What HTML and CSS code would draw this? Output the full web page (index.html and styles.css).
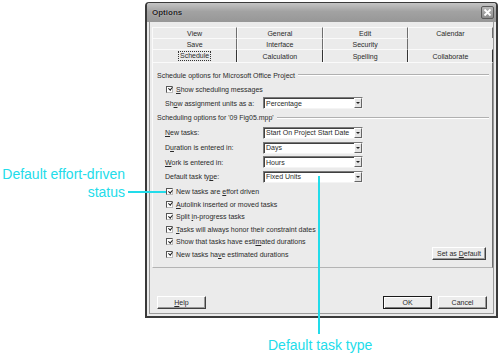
FILE: index.html
```html
<!DOCTYPE html>
<html lang="en">

<head>
    <meta charset="UTF-8">
    <title>Options</title>
    <link rel="stylesheet" href="styles.css">
</head>

<body>
    <div class="page">

        <div class="dialog">
            <div class="titlebar">
                <span class="title">Options</span>
                <span class="close">
                    <svg viewBox="0 0 13 13" width="13" height="13">
                        <path d="M3.5 3.5 L9.5 9.5 M9.5 3.5 L3.5 9.5" stroke="#fff" stroke-width="1.8" />
                    </svg>
                </span>
            </div>

            <div class="content">
                <div class="tabs">
                    <div class="tab-row">
                        <div class="tab">View</div>
                        <div class="tab">General</div>
                        <div class="tab">Edit</div>
                        <div class="tab">Calendar</div>
                    </div>
                    <div class="tab-row">
                        <div class="tab">Save</div>
                        <div class="tab">Interface</div>
                        <div class="tab">Security</div>
                        <div class="tab empty"></div>
                    </div>
                    <div class="tab-row front">
                        <div class="tab selected"><span class="focus">Schedule</span></div>
                        <div class="tab">Calculation</div>
                        <div class="tab">Spelling</div>
                        <div class="tab">Collaborate</div>
                    </div>
                </div>

                <div class="panel">
                    <div class="group-head"><span>Schedule options for Microsoft Office Project</span></div>
                    <div class="check-row"><span class="cb"></span><span><u>S</u>how scheduling messages</span></div>
                    <div class="field-row">
                        <label>Sh<u>o</u>w assignment units as a:</label>
                        <div class="select">Percentage<span class="arrow"></span></div>
                    </div>

                    <div class="group-head second"><span>Scheduling options for '09 Fig05.mpp'</span></div>
                    <div class="field-row tall">
                        <label><u>N</u>ew tasks:</label>
                        <div class="select">Start On Project Start Date<span class="arrow"></span></div>
                    </div>
                    <div class="field-row tall">
                        <label>D<u>u</u>ration is entered in:</label>
                        <div class="select">Days<span class="arrow"></span></div>
                    </div>
                    <div class="field-row">
                        <label><u>W</u>ork is entered in:</label>
                        <div class="select">Hours<span class="arrow"></span></div>
                    </div>
                    <div class="field-row tall">
                        <label>Default task ty<u>p</u>e:</label>
                        <div class="select">Fixed Units<span class="arrow"></span></div>
                    </div>

                    <div class="checks">
                        <div class="check-list">
                            <div class="check-item"><span class="cb"></span><span>New tasks are <u>e</u>ffort driven</span></div>
                            <div class="check-item"><span class="cb"></span><span><u>A</u>utolink inserted or moved tasks</span></div>
                            <div class="check-item"><span class="cb"></span><span>Split <u>i</u>n-progress tasks</span></div>
                            <div class="check-item"><span class="cb"></span><span><u>T</u>asks will always honor their constraint dates</span></div>
                            <div class="check-item"><span class="cb"></span><span>Show that tasks have esti<u>m</u>ated durations</span></div>
                            <div class="check-item"><span class="cb"></span><span>New tasks ha<u>v</u>e estimated durations</span></div>
                        </div>
                        <button type="button" class="btn default-btn">Set as <u>D</u>efault</button>
                    </div>
                </div>

                <div class="buttons">
                    <button type="button" class="btn"><u>H</u>elp</button>
                    <span class="spacer"></span>
                    <button type="button" class="btn ok">OK</button>
                    <button type="button" class="btn">Cancel</button>
                </div>
            </div>
        </div>

        <!-- callouts drawn over the screenshot -->
        <div class="note note-effort">Default effort-driven<br>status</div>
        <div class="callout-h"></div>
        <div class="callout-v"></div>
        <div class="note note-type">Default task type</div>

    </div>
</body>

</html>
```

FILE: styles.css
```css
body {
    margin: 0;
    background-color: #fff;
}

.page {
    position: relative;
    width: 500px;
    height: 353px;
    overflow: hidden;
    background-color: #fff;
    font-family: 'Liberation Sans', Arial, sans-serif;
}

/* dialog frame */
.dialog {
    margin: 2px 0 0 145px;
    width: 353px;
    height: 316px;
    box-sizing: border-box;
    border: 2px solid #3a3a3a;
    border-top-width: 1px;
    border-radius: 4px 4px 0 0;
    background-color: #ebebeb;
    box-shadow: inset 0 0 0 2px #ebebeb, inset 0 0 0 3px #9a9a9a;
    display: flex;
    flex-direction: column;
    color: #2a2a2a;
    font-size: 7px;
}

.titlebar {
    height: 19px;
    display: flex;
    align-items: center;
    justify-content: space-between;
    padding: 0 2px 0 5px;
    background: linear-gradient(#c4c4c4, #a2a2a2 45%, #979797);
    border-radius: 3px 3px 0 0;
}

.title {
    font-size: 8px;
    font-weight: bold;
    color: #1e1e1e;
    text-shadow: 0 0 1px #e0e0e0;
}

.close {
    width: 13px;
    height: 13px;
    box-sizing: border-box;
    border: 1px solid #5a5a5a;
    border-radius: 2px;
    background: linear-gradient(#b8b8b8, #8c8c8c);
    display: flex;
}

.close svg {
    margin: -1px;
}

.content {
    flex: 1;
    padding: 5px 3px 0 5px;
    display: flex;
    flex-direction: column;
}

/* tabs */
.tabs {
    width: 341px;
}

.tab-row {
    display: flex;
    height: 11px;
}

.tab-row.front {
    height: 13px;
}

.tab {
    flex: 1;
    display: flex;
    align-items: center;
    justify-content: center;
    box-sizing: border-box;
    border-left: 1px solid #fafafa;
    border-right: 1px solid #6e6e6e;
    border-top: 1px solid #fafafa;
}

.tab.empty {
    border-right-color: transparent;
    border-left-color: transparent;
    border-top-color: transparent;
}

.tab-row.front .tab {
    border-right-color: #333;
}

.focus {
    border: 1px dotted #333;
    padding: 0 1px;
    line-height: 8px;
}

/* tab page */
.panel {
    width: 341px;
    height: 206px;
    box-sizing: border-box;
    border-top: 1px solid #fafafa;
    border-left: 1px solid #fafafa;
    border-right: 1px solid #6e6e6e;
    border-bottom: 1px solid #b4b4b4;
    padding: 5px 3px 0 4px;
}

.group-head {
    height: 14px;
    display: flex;
    align-items: center;
    gap: 3px;
}

.group-head::after {
    content: "";
    flex: 1;
    border-top: 1px solid #b0b0b0;
    border-bottom: 1px solid #fff;
}

.group-head.second {
    height: 15px;
}

.check-row {
    height: 14px;
    display: flex;
    align-items: center;
    padding-left: 9px;
}

.cb {
    position: relative;
    width: 7px;
    height: 7px;
    box-sizing: border-box;
    border: 1px solid #555;
    border-right-color: #bbb;
    border-bottom-color: #bbb;
    background-color: #fff;
    margin-right: 3px;
    flex-shrink: 0;
}

.cb::after {
    content: "";
    position: absolute;
    left: 1.5px;
    top: -0.5px;
    width: 1.5px;
    height: 3px;
    border: solid #1a1a1a;
    border-width: 0 1.3px 1.3px 0;
    transform: rotate(40deg);
}

.field-row {
    height: 14px;
    display: flex;
    align-items: center;
    padding-left: 8px;
}

.field-row.tall {
    height: 15px;
}

.field-row label {
    width: 98px;
}

.select {
    position: relative;
    width: 100px;
    height: 12px;
    box-sizing: border-box;
    border: 1px solid #7a7a7a;
    border-right-color: #f4f4f4;
    border-bottom-color: #f4f4f4;
    box-shadow: inset 1px 1px 0 #404040;
    background-color: #fff;
    padding-left: 2px;
    display: flex;
    align-items: center;
    white-space: nowrap;
}

.arrow {
    position: absolute;
    right: 0;
    top: 0;
    width: 8px;
    height: 10px;
    box-sizing: border-box;
    background-color: #e4e4e4;
    border-left: 1px solid #fff;
    border-top: 1px solid #fff;
    border-right: 1px solid #666;
    border-bottom: 1px solid #666;
}

.arrow::after {
    content: "";
    position: absolute;
    left: 1px;
    top: 3px;
    border-left: 2px solid transparent;
    border-right: 2px solid transparent;
    border-top: 2px solid #222;
}

.checks {
    margin-top: 1.5px;
    display: flex;
    align-items: flex-end;
    justify-content: space-between;
}

.check-list {
    padding-left: 9px;
}

.check-item {
    height: 12.5px;
    display: flex;
    align-items: center;
}

/* push buttons */
.btn {
    height: 13px;
    box-sizing: border-box;
    padding: 0;
    font-family: inherit;
    font-size: 7px;
    color: #2a2a2a;
    background-color: #ececec;
    border: 1px solid;
    border-color: #fff #404040 #404040 #fff;
    box-shadow: inset -1px -1px 0 #9a9a9a;
    cursor: pointer;
}

.default-btn {
    width: 54px;
    margin: 0 3px 1px 0;
}

.buttons {
    display: flex;
    margin-top: 28px;
    padding: 0 6px 0 5px;
    gap: 6px;
}

.buttons .btn {
    width: 49px;
}

.spacer {
    flex: 1;
}

.btn.ok {
    border: 1px solid #1a1a1a;
    box-shadow: inset 1px 1px 0 #fff, inset -1px -1px 0 #7a7a7a;
}

/* callouts */
.note {
    position: absolute;
    color: #22dcea;
    font-size: 14px;
    line-height: 18px;
}

.note-effort {
    left: 0;
    top: 165px;
    width: 125px;
    text-align: right;
}

.note-type {
    left: 268px;
    top: 336px;
}

.callout-h {
    position: absolute;
    left: 128px;
    top: 191px;
    width: 38px;
    height: 2px;
    background-color: #22dcea;
}

.callout-v {
    position: absolute;
    left: 318px;
    top: 176px;
    width: 2px;
    height: 158px;
    background-color: #22dcea;
}
```
